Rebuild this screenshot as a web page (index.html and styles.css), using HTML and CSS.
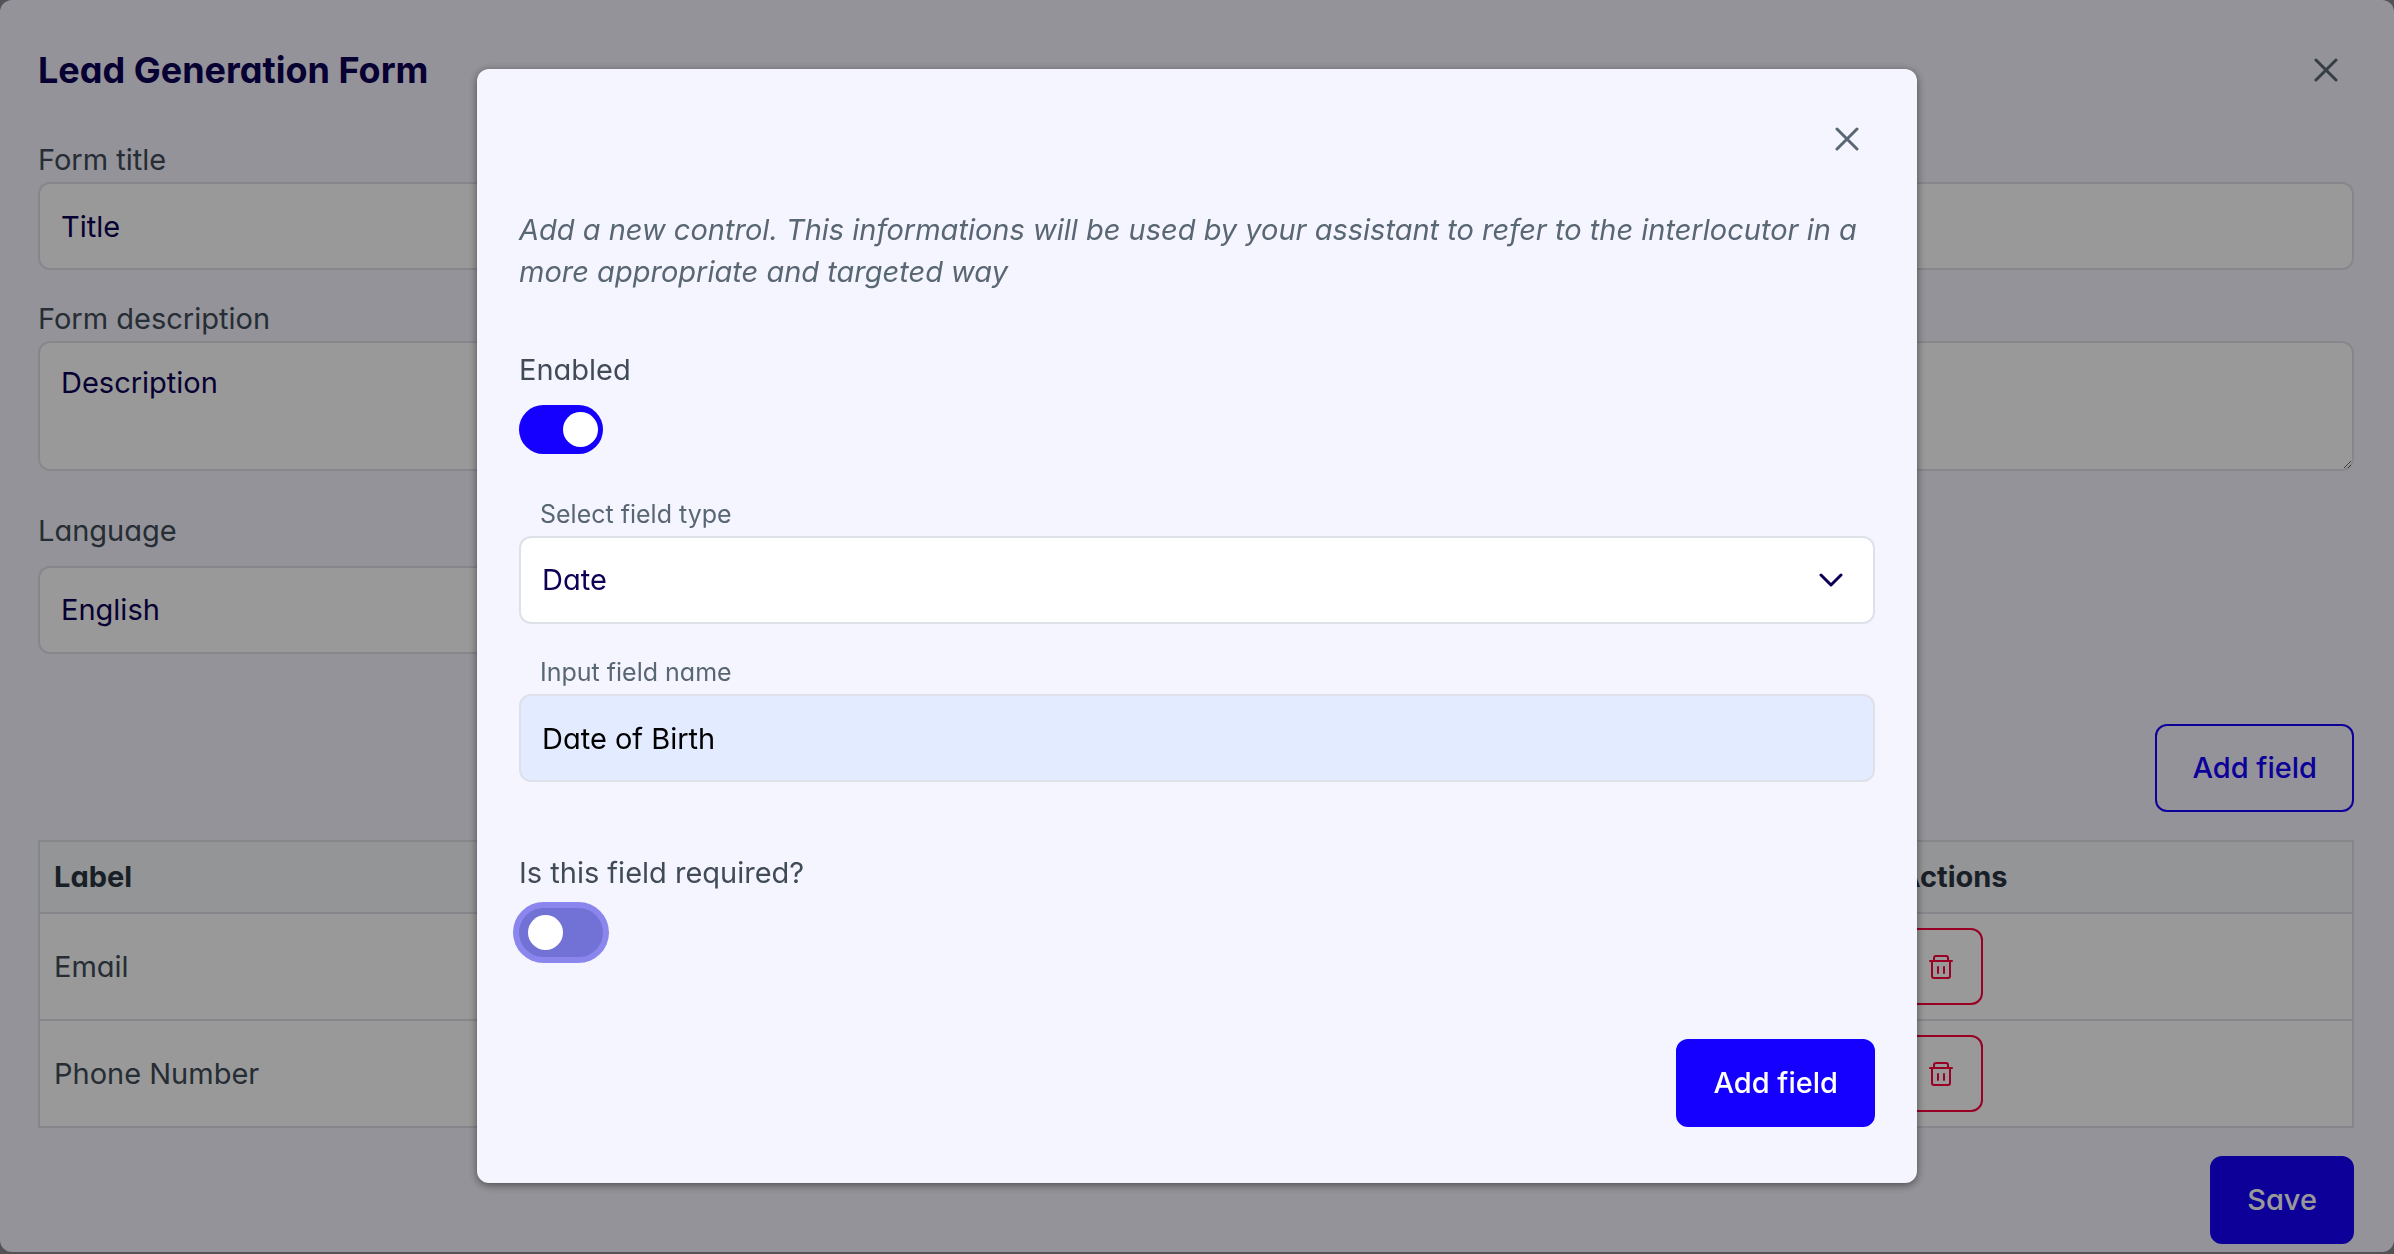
FILE: index.html
```html
<!DOCTYPE html>
<html lang="en">
<head>
  <meta charset="UTF-8" />
  <meta name="viewport" content="width=device-width, initial-scale=1.0"/>
  <title>Lead Generation Form</title>
  <link rel="stylesheet" href="styles.css">
</head>
<body>
  <main class="panel">
    <header class="panel-header">
      <h1>Lead Generation Form</h1>
      <button type="button" class="close" aria-label="Close">
        <svg viewBox="0 0 24 24"><path d="M2 2L22 22M22 2L2 22"/></svg>
      </button>
    </header>

    <form class="lead-form">
      <div class="field">
        <label for="formTitle">Form title</label>
        <input type="text" id="formTitle" class="control" value="Title" />
      </div>
      <div class="field">
        <label for="formDescription">Form description</label>
        <textarea id="formDescription" class="control">Description</textarea>
      </div>
      <div class="field field-language">
        <label for="language">Language</label>
        <select id="language" class="control">
          <option>English</option>
        </select>
      </div>

      <div class="actions actions-add">
        <button type="button" class="btn btn-outline">Add field</button>
      </div>

      <table class="fields-table">
        <thead>
          <tr>
            <th>Label</th>
            <th class="col-actions">Actions</th>
          </tr>
        </thead>
        <tbody>
          <tr>
            <td>Email</td>
            <td>
              <button type="button" class="btn-delete" aria-label="Delete Email">
                <svg viewBox="0 0 24 24"><path d="M1 6H23M5 6V3Q5 1 7 1H17Q19 1 19 3V6M3 6V21Q3 23 5 23H19Q21 23 21 21V6M9 12V18M15 12V18"/></svg>
              </button>
            </td>
          </tr>
          <tr>
            <td>Phone Number</td>
            <td>
              <button type="button" class="btn-delete" aria-label="Delete Phone Number">
                <svg viewBox="0 0 24 24"><path d="M1 6H23M5 6V3Q5 1 7 1H17Q19 1 19 3V6M3 6V21Q3 23 5 23H19Q21 23 21 21V6M9 12V18M15 12V18"/></svg>
              </button>
            </td>
          </tr>
        </tbody>
      </table>

      <div class="actions">
        <button type="button" class="btn btn-primary">Save</button>
      </div>
    </form>
  </main>

  <div class="overlay">
    <form class="modal" role="dialog" aria-modal="true" aria-label="Add field">
      <div class="modal-header">
        <button type="button" class="close" aria-label="Close dialog">
          <svg viewBox="0 0 24 24"><path d="M2 2L22 22M22 2L2 22"/></svg>
        </button>
      </div>

      <p class="hint">Add a new control. This informations will be used by your assistant to refer to the interlocutor in a more appropriate and targeted way</p>

      <div class="switch-field">
        <label for="enabled">Enabled</label>
        <input type="checkbox" id="enabled" class="switch" checked />
      </div>

      <div class="modal-field">
        <label for="fieldType">Select field type</label>
        <div class="select-wrap">
          <select id="fieldType" class="control">
            <option>Date</option>
          </select>
          <svg class="chevron" viewBox="0 0 24 14"><path d="M2 2L12 12L22 2"/></svg>
        </div>
      </div>

      <div class="modal-field">
        <label for="fieldName">Input field name</label>
        <input type="text" id="fieldName" class="control autofilled" value="Date of Birth" />
      </div>

      <div class="switch-field switch-required">
        <label for="required">Is this field required?</label>
        <input type="checkbox" id="required" class="switch switch-focus" />
      </div>

      <div class="actions modal-actions">
        <button type="button" class="btn btn-primary">Add field</button>
      </div>
    </form>
  </div>
</body>
</html>
```
FILE: styles.css
```css
* {
  box-sizing: border-box;
}
body {
  margin: 0;
  background: #8a8a8e;
  color: #404b57;
  font-family: Inter, "Open Sans", sans-serif;
  font-feature-settings: "cv11";
  font-size: 29px;
  line-height: 42px;
}
input, select, textarea, button {
  font: inherit;
  font-feature-settings: inherit;
}
button {
  cursor: pointer;
}
svg {
  display: block;
  fill: none;
  stroke: currentColor;
  stroke-width: 2;
  stroke-linecap: round;
  stroke-linejoin: round;
}

/* page panel */
.panel {
  padding: 42px 40px 8px 38px;
  background: #f5f5ff;
  border-radius: 12px;
}
.panel-header {
  display: flex;
  align-items: center;
  justify-content: space-between;
  height: 56px;
  margin-bottom: 41px;
}
h1 {
  margin: 0;
  color: #0d0055;
  font-size: 36px;
  font-weight: 700;
}
.close {
  display: flex;
  align-items: center;
  justify-content: center;
  width: 56px;
  height: 56px;
  padding: 0;
  border: none;
  background: none;
  color: #596673;
}
.close svg {
  width: 24px;
  height: 24px;
  stroke-width: 3;
}
.field {
  margin-bottom: 28px;
}
.field label {
  display: block;
  margin-bottom: 1px;
}
.control {
  display: block;
  width: 100%;
  height: 88px;
  padding: 0 21px;
  border: 2px solid #dfe1e8;
  border-radius: 12px;
  background: #fff;
  color: #0d0055;
  appearance: none;
}
textarea.control {
  height: 130px;
  padding: 19px 21px;
  resize: vertical;
}
.field-language {
  width: 50%;
  margin-top: 39px;
  margin-bottom: 70px;
}
.field-language label {
  margin-bottom: 14px;
}
.actions {
  display: flex;
  justify-content: flex-end;
}
.actions-add {
  margin-bottom: 28px;
}
.btn {
  height: 88px;
  padding: 0 35px;
  border: 2px solid #1500ff;
  border-radius: 12px;
  font-weight: 500;
}
.btn-primary {
  background: #1500ff;
  color: #fff;
}
.btn-outline {
  background: transparent;
  color: #1500ff;
}

/* fields table */
.fields-table {
  width: 100%;
  margin-bottom: 28px;
  border: 2px solid #dfe1e8;
  border-collapse: collapse;
  background: #fff;
}
.fields-table th, .fields-table td {
  padding: 14px;
  border-bottom: 2px solid #dfe1e8;
  text-align: left;
}
.fields-table th {
  background: #f7f8fa;
  color: #2b3441;
  font-weight: 700;
}
.fields-table .col-actions {
  width: 468px;
}
.btn-delete {
  display: flex;
  align-items: center;
  justify-content: center;
  width: 84px;
  height: 77px;
  padding: 0;
  border: 2px solid #ff003d;
  border-radius: 12px;
  background: transparent;
  color: #ff003d;
}
.btn-delete svg {
  width: 24px;
  height: 24px;
}

/* dialog */
.overlay {
  position: fixed;
  inset: 0;
  display: flex;
  align-items: center;
  justify-content: center;
  padding-bottom: 2px;
  background: rgba(0, 0, 0, 0.4);
}
.modal {
  width: 100%;
  max-width: 1440px;
  padding: 42px 42px 56px;
  border-radius: 12px;
  background: #f5f5ff;
  box-shadow: 0 2px 8px rgba(0, 0, 0, 0.5);
}
.modal-header {
  display: flex;
  justify-content: flex-end;
  margin-bottom: 42px;
}
.hint {
  margin: 0 0 56px;
  color: #596673;
  font-style: italic;
}
.switch-field label {
  display: block;
  margin-bottom: 14px;
}
.switch-field {
  margin-bottom: 42px;
}
.switch {
  display: flex;
  align-items: center;
  width: 84px;
  height: 49px;
  margin: 0;
  padding: 0 5px 0 9px;
  border-radius: 28px;
  background: #7272d6;
  appearance: none;
}
.switch::before {
  content: "";
  width: 35px;
  height: 35px;
  border-radius: 50%;
  background: #fff;
}
.switch:checked {
  justify-content: flex-end;
  background: #1500ff;
}
.switch-focus {
  box-shadow: 0 0 0 6px #8b86ee;
}
.modal-field {
  margin-bottom: 30px;
}
.modal-field label {
  display: block;
  margin-bottom: 4px;
  padding-left: 21px;
  color: #596673;
  font-size: 25px;
  line-height: 36px;
}
.select-wrap {
  position: relative;
}
.chevron {
  position: absolute;
  top: 37px;
  right: 32px;
  width: 24px;
  height: 14px;
  color: #0d0055;
  stroke-width: 3;
  pointer-events: none;
}
.autofilled {
  background: #e2ebff;
  color: #000;
}
.switch-required {
  margin-top: 70px;
}
.modal-actions {
  margin-top: 82px;
}
```
